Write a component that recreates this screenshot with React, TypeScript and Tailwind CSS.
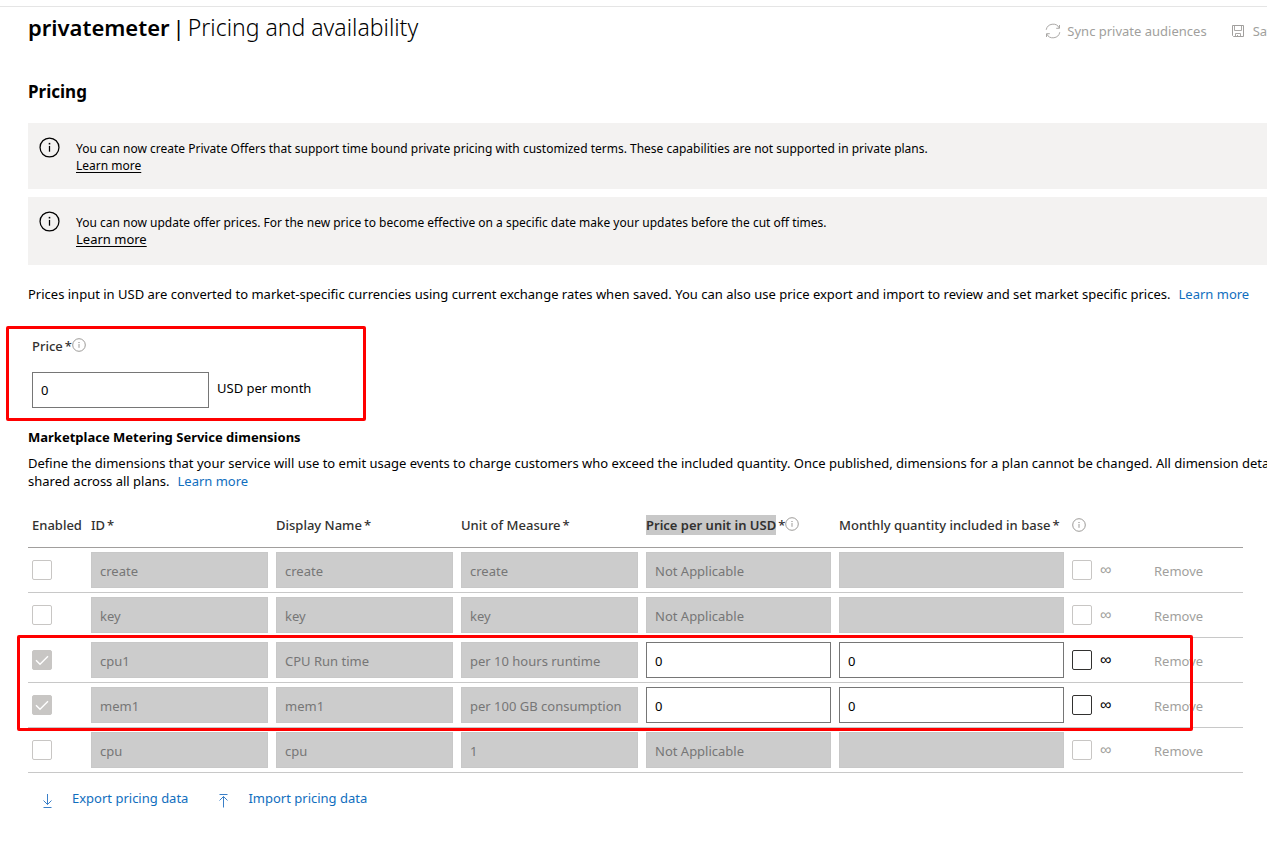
import type { ReactNode } from 'react';

type Dimension = {
  id: string;
  name: string;
  unit: string;
  enabled: boolean;
};

const dimensions: Dimension[] = [
  { id: 'create', name: 'create', unit: 'create', enabled: false },
  { id: 'key', name: 'key', unit: 'key', enabled: false },
  { id: 'cpu1', name: 'CPU Run time', unit: 'per 10 hours runtime', enabled: true },
  { id: 'mem1', name: 'mem1', unit: 'per 100 GB consumption', enabled: true },
  { id: 'cpu', name: 'cpu', unit: '1', enabled: false },
];

function InfoIcon({ className }: { className: string }) {
  return (
    <svg viewBox="0 0 20 20" fill="none" stroke="currentColor" className={className} aria-hidden="true">
      <circle cx="10" cy="10" r="9" strokeWidth="1.2" />
      <path d="M10 8.5v5.500" strokeWidth="1.2" />
      <path d="M10 5.600v1.500" strokeWidth="1.5" />
    </svg>
  );
}

function SyncIcon() {
  return (
    <svg viewBox="0 0 16 16" fill="none" stroke="currentColor" className="size-4" aria-hidden="true">
      <path d="M1.200 6.800A7 7 0 0 1 14.300 5M14.800 9.200A7 7 0 0 1 1.700 11" strokeWidth="0.9" />
      <path d="M14.500 2v3.300h-3.300M1.500 14v-3.300h3.300" strokeWidth="0.9" />
    </svg>
  );
}

function SaveIcon() {
  return (
    <svg viewBox="0 0 14 14" fill="none" stroke="currentColor" className="size-3.5" aria-hidden="true">
      <path d="M1.500 1.500h11v11h-10l-1-1z" />
      <path d="M3.500 1.500v5h7v-5M4.500 12.500v-3h5v3M6.500 11v1.500" strokeWidth="0.9" />
    </svg>
  );
}

function Banner({ children, linkClass, className }: { children: ReactNode; linkClass: string; className: string }) {
  return (
    <div className={`flex gap-4 bg-[#f3f2f1] pl-[11px] ${className}`}>
      <InfoIcon className="mt-3.5 size-[21px] shrink-0 text-black" />
      <div className="mt-[17px] text-[12px] leading-[17px] whitespace-nowrap">
        <p>{children}</p>
        <a href="#learn" className={`block underline underline-offset-2 ${linkClass}`}>
          Learn more
        </a>
      </div>
    </div>
  );
}

function Field({ label, value, disabled }: { label: string; value: string; disabled: boolean }) {
  return (
    <input
      type="text"
      aria-label={label}
      defaultValue={value}
      disabled={disabled}
      className="block h-9 w-full border border-[#767676] bg-white px-2 pt-0.5 text-[13px] text-black disabled:border-[#c8c8c8] disabled:bg-[#cccccc] disabled:text-[#767676]"
    />
  );
}

function Check({ label, checked, disabled }: { label: string; checked?: boolean; disabled: boolean }) {
  return (
    <span className="grid size-5 shrink-0">
      <input
        type="checkbox"
        aria-label={label}
        defaultChecked={checked}
        disabled={disabled}
        className="peer col-start-1 row-start-1 size-5 appearance-none rounded-xs border border-[#323130] bg-white checked:bg-[#c8c6c4] disabled:border-[#c8c6c4]"
      />
      <svg
        viewBox="0 0 20 20"
        fill="none"
        stroke="white"
        strokeWidth="1.4"
        className="pointer-events-none col-start-1 row-start-1 hidden size-5 peer-checked:block"
        aria-hidden="true"
      >
        <path d="M4 10.200l4 4 8-8" />
      </svg>
    </span>
  );
}

function Heading({ children, selected }: { children: ReactNode; selected?: boolean }) {
  return (
    <th scope="col" className="px-1 pb-3 text-left font-medium whitespace-nowrap">
      <span className="flex items-center">
        <span className={selected ? 'bg-[#c8c8c8] py-px font-semibold' : 'py-px'}>{children}</span>
        <span className="ml-0.5">*</span>
        {selected && <InfoIcon className="mb-0.5 size-3.5 text-[#8a8886]" />}
      </span>
    </th>
  );
}

export default function App() {
  return (
    <div className="overflow-hidden bg-white pt-1.5 font-['Noto_Sans','Open_Sans',sans-serif] text-[13px] leading-[18px] text-black">
      <header className="flex items-start justify-between border-t border-[#e5e5e5] pl-7">
        <h1 className="flex gap-[3px] pt-1 text-[22px] leading-8 whitespace-nowrap">
          <span className="font-semibold">privatemeter</span>
          <span>|</span>
          <span className="text-[23px] font-light">Pricing and availability</span>
        </h1>
        <div className="-mr-3.5 flex gap-6 pt-[15px] whitespace-nowrap text-[#a19f9d]">
          <button type="button" disabled className="flex items-center gap-1.5">
            <SyncIcon />
            Sync private audiences
          </button>
          <button type="button" disabled className="flex items-center gap-2">
            <SaveIcon />
            Save
          </button>
        </div>
      </header>

      <main>
        <h2 className="mt-[37px] pl-7 text-[17px] leading-6 font-bold">Pricing</h2>

        <section className="mt-[19px] ml-7 flex flex-col gap-2">
          <Banner className="h-[66px]" linkClass="text-[12px]">
            You can now create Private Offers that support time bound private pricing with customized terms. These
            capabilities are not supported in private plans.
          </Banner>
          <Banner className="h-[68px]" linkClass="text-[13px]">
            You can now update offer prices. For the new price to become effective on a specific date make your updates
            before the cut off times.
          </Banner>
        </section>

        <p className="mt-5 pl-7 whitespace-nowrap">
          Prices input in USD are converted to market-specific currencies using current exchange rates when saved. You
          can also use price export and import to review and set market specific prices.
          <a href="#prices" className="ml-2 text-[#106ebe]">
            Learn more
          </a>
        </p>

        <section className="mt-[23px] ml-1.5 h-[95px] w-[360px] rounded-xs border-3 border-[#ff0000] pt-2 pl-[23px]">
          <label htmlFor="price" className="flex items-center font-medium text-[#323130]">
            Price
            <span className="ml-0.5">*</span>
            <InfoIcon className="mb-0.5 size-3.5 text-[#8a8886]" />
          </label>
          <div className="mt-[17px] flex items-center gap-2">
            <input
              id="price"
              type="text"
              defaultValue="0"
              className="h-9 w-[177px] border border-[#767676] px-2 text-[13px]"
            />
            <span className="pb-1">USD per month</span>
          </div>
        </section>

        <section className="pl-7">
          <h3 className="mt-[7px] font-bold">Marketplace Metering Service dimensions</h3>
          <p className="mt-2 whitespace-nowrap">
            Define the dimensions that your service will use to emit usage events to charge customers who exceed the
            included quantity. Once published, dimensions for a plan cannot be changed. All dimension details are
            <br />
            shared across all plans.
            <a href="#dimensions" className="ml-2 text-[#106ebe]">
              Learn more
            </a>
          </p>

          <div className="relative mt-[25px] mr-6">
            <table className="w-full table-fixed border-collapse">
              <colgroup>
                <col className="w-[59px]" />
                <col className="w-[185px]" />
                <col className="w-[185px]" />
                <col className="w-[185px]" />
                <col className="w-[193px]" />
                <col className="w-[233px]" />
                <col className="w-[82px]" />
                <col className="w-[93px]" />
              </colgroup>
              <thead>
                <tr className="border-b border-[#a19f9d] text-[#323130]">
                  <th scope="col" className="px-1 pb-3 text-left font-medium">
                    Enabled
                  </th>
                  <Heading>ID</Heading>
                  <Heading>Display Name</Heading>
                  <Heading>Unit of Measure</Heading>
                  <Heading selected>Price per unit in USD</Heading>
                  <Heading>Monthly quantity included in base</Heading>
                  <td className="px-1 pb-3">
                    <InfoIcon className="size-3.5 text-[#8a8886]" />
                  </td>
                  <td />
                </tr>
              </thead>
              <tbody>
                {dimensions.map((d) => (
                  <tr key={d.id} className="h-[45px] border-b border-[#c8c8c8]">
                    <td className="px-1">
                      <Check label={`Enable ${d.id}`} checked={d.enabled} disabled />
                    </td>
                    <td className="px-1">
                      <Field label="ID" value={d.id} disabled />
                    </td>
                    <td className="px-1">
                      <Field label="Display name" value={d.name} disabled />
                    </td>
                    <td className="px-1">
                      <Field label="Unit of measure" value={d.unit} disabled />
                    </td>
                    <td className="px-1">
                      <Field label="Price per unit" value={d.enabled ? '0' : 'Not Applicable'} disabled={!d.enabled} />
                    </td>
                    <td className="px-1">
                      <Field label="Monthly quantity" value={d.enabled ? '0' : ''} disabled={!d.enabled} />
                    </td>
                    <td className="px-1">
                      <span className={`flex items-center gap-2 ${d.enabled ? 'text-black' : 'text-[#a19f9d]'}`}>
                        <Check label={`Unlimited ${d.id}`} disabled={!d.enabled} />
                        <span className="font-['Liberation_Sans',sans-serif] text-[16px]">∞</span>
                      </span>
                    </td>
                    <td className="px-1 pt-0.5">
                      <button type="button" disabled className="text-[#a19f9d]">
                        Remove
                      </button>
                    </td>
                  </tr>
                ))}
              </tbody>
            </table>
            <div className="pointer-events-none absolute right-[50px] bottom-[42px] -left-[11px] h-24 rounded-xs border-3 border-[#ff0000]" />
          </div>

          <div className="mt-4 flex gap-7 pb-9 pl-3 text-[#106ebe]">
            <button type="button" className="flex items-start gap-[18px]">
              <svg viewBox="0 0 14 20" fill="none" stroke="#3a7fc8" className="h-5 w-3.5" aria-hidden="true">
                <path d="M7.500 5v10.500M3.500 11.500l4 4 4-4M3.500 18.500h8" />
              </svg>
              Export pricing data
            </button>
            <button type="button" className="flex items-start gap-[18px]">
              <svg viewBox="0 0 14 20" fill="none" stroke="#3a7fc8" className="h-5 w-3.5" aria-hidden="true">
                <path d="M7.500 18.500v-11M3.500 11.500l4-4 4 4M3.500 5.500h8" />
              </svg>
              Import pricing data
            </button>
          </div>
        </section>
      </main>
    </div>
  );
}
